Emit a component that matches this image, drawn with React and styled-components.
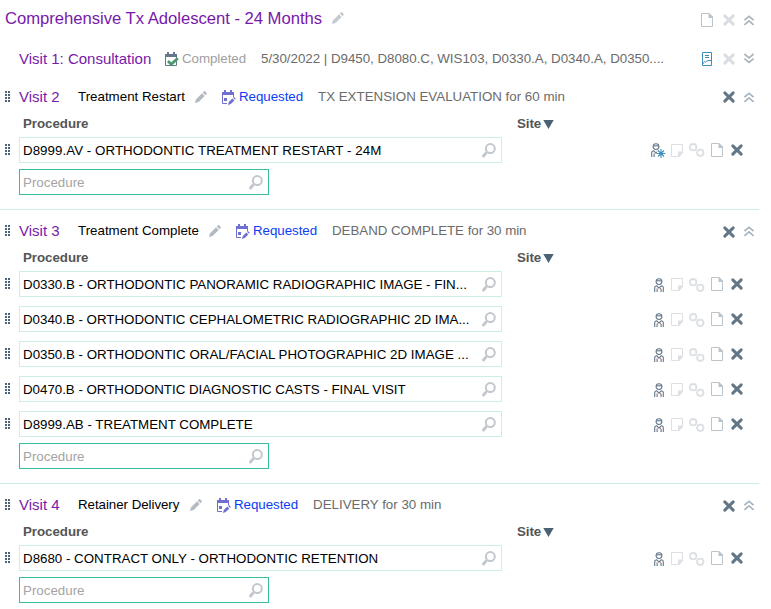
import React from 'react';
import styled, { createGlobalStyle } from 'styled-components';

const Global = createGlobalStyle`
  * { box-sizing: border-box; }
  body { margin: 0; background: #fff; font-family: "Liberation Sans", Arial, sans-serif; font-size: 13.333px; }
`;

const Page = styled.main`
  width: 771px;
  height: 609px;
  overflow: hidden;
  background: #fff;
`;

const PlanHeader = styled.header`
  display: flex;
  align-items: center;
  width: 759px;
  height: 38px;
  padding: 0 5px;
`;

const PlanTitle = styled.h1`
  margin: 0;
  width: 325px;
  flex: none;
  font-size: 16.67px;
  font-weight: 400;
  line-height: 20px;
  color: #7719aa;
  white-space: nowrap;
  letter-spacing: -0.03px;
`;

const VisitHeader = styled.div`
  display: flex;
  align-items: center;
  width: 759px;
  height: ${(p) => (p.$collapsed ? 37 : 40)}px;
  padding: ${(p) => (p.$collapsed ? 4 : 2)}px 5px 0 4px;
`;

const VisitTitle = styled.h2`
  flex: none;
  margin: 0 0 0 ${(p) => (p.$indent ? 15 : 8)}px;
  width: ${(p) => p.$width || 59}px;
  font-size: 15px;
  font-weight: 400;
  line-height: 18px;
  color: #7719aa;
  white-space: nowrap;
`;

const Label = styled.span`
  flex: none;
  width: ${(p) => (p.$width ? `${p.$width}px` : 'auto')};
  line-height: 16px;
  white-space: nowrap;
  color: ${(p) => p.$color || '#000'};
  letter-spacing: ${(p) => p.$spacing || 0}px;
`;

const Actions = styled.div`
  display: flex;
  align-items: center;
  margin-top: ${(p) => p.$drop || 0}px;
  margin-left: auto;
  gap: 9px;
`;

const VisitSection = styled.section`
  width: 759px;
  border-top: 1px solid ${(p) => (p.$divided ? '#cdeee4' : 'transparent')};
  padding-bottom: 14px;
`;

const Columns = styled.div`
  display: flex;
  height: 21px;
  padding-left: 23px;
  font-weight: 700;
  line-height: 16px;
  color: #555;
`;

const ProcedureColumn = styled.span`
  width: 494px;
  letter-spacing: -0.05px;
`;

const SiteColumn = styled.span`
  display: flex;
  gap: 2px;
  letter-spacing: -0.1px;
`;

const Procedures = styled.div`
  display: grid;
  gap: 9px;
`;

const ProcedureRow = styled.div`
  display: flex;
  align-items: center;
  height: 26px;
  padding: 0 16px 0 4px;
`;

const Field = styled.div`
  display: flex;
  align-items: center;
  flex: none;
  width: ${(p) => (p.$entry ? 250 : 483)}px;
  height: 26px;
  margin: ${(p) => (p.$entry ? '6px 0 0 19px' : '0 0 0 8px')};
  padding: 0 5px 0 3px;
  border: 1px solid ${(p) => (p.$entry ? '#35bf9c' : '#cdeee4')};
  color: ${(p) => (p.$entry ? '#a5a5a5' : '#000')};
  white-space: nowrap;
`;

const FieldText = styled.span`
  flex: 1;
  margin-top: 2px;
  line-height: 16px;
  letter-spacing: ${(p) => p.$spacing || 0}px;
`;

const RowActions = styled.div`
  display: flex;
  align-items: center;
  margin-left: auto;
`;

const Icon = styled.svg`
  display: block;
  flex: none;
  overflow: visible;
  margin-right: ${(p) => p.$mr || 0}px;
  margin-left: ${(p) => p.$ml || 0}px;
  margin-top: ${(p) => p.$mt || 0}px;
`;

const Grip = () => (
  <Icon width="7" height="12" viewBox="0 0 7 12" shapeRendering="crispEdges" fill="#4d6275">
    {[0, 3, 6, 9].map((y) => [1, 4].map((x) => <rect key={`${x}-${y}`} x={x} y={y} width="2" height="2" />))}
  </Icon>
);

const Pencil = ({ color = '#b3bac2', ...p }) => (
  <Icon width="12" height="12" viewBox="0 0 12 12" fill={color} {...p}>
    <path d="M0 12 .9 8.4 7 2.3 9.7 5 3.6 11.1Z" />
    <path d="M7.7 1.6 9 .3q.6-.5 1.1 0l1.6 1.6q.5.5 0 1.1l-1.3 1.3Z" />
  </Icon>
);

const Cross = ({ pale, ...p }) => (
  <Icon width="12" height="12" viewBox="0 0 12 12" stroke={pale ? '#dadee2' : '#627686'} strokeWidth="3" strokeLinecap="round" {...p}>
    <path d="M1.8 1.9 10.2 10.1M10.2 1.9 1.8 10.1" />
  </Icon>
);

const Chevrons = ({ down }) => (
  <Icon width="10" height="11" viewBox="0 0 10 11" fill="none" stroke="#a9b4bf" strokeWidth="1.7">
    <path d={down ? 'M.4 1 5 4.9 9.6 1M.4 5.6 5 9.5 9.6 5.6' : 'M.4 5.2 5 1.3 9.6 5.2M.4 9.8 5 5.9 9.6 9.8'} />
  </Icon>
);

const Document = (p) => (
  <Icon width="12" height="14" viewBox="0 0 12 14" {...p}>
    <path d="M.5.5H8L11.5 4V13.5H.5Z" fill="none" stroke="#bcc4cb" />
    <path d="M7.5 0H8L12 4V5H7.5Z" fill="#bcc4cb" />
  </Icon>
);

const SignedPage = () => (
  <Icon width="10" height="14" viewBox="0 0 10 14" fill="none" stroke="#3f8db8" $mr={2}>
    <path d="M.5.5H9.5V13.5H.5ZM3 3.5H7M3 5.5H7M.8 12.2C1.5 10 3 9 3.3 10.3 4.5 8.7 6 8.5 9 8.5" />
  </Icon>
);

const Calendar = ({ done, ...p }) => {
  const color = done ? '#63788a' : '#7070d0';
  return (
    <Icon width="14" height="15" viewBox="0 0 14 15" fill="none" $mr={3} {...p}>
      <path d="M0 2H12V5H0ZM2 0H4V3H2ZM8 0H10V3H8Z" fill={color} />
      {done ? (
        <>
          <path d="M.5 4V13.5H11.5V4" stroke={color} />
          <path d="M3 9 6.2 12.2 12.8 6.3" stroke="#4b986f" strokeWidth="2.8" />
        </>
      ) : (
        <>
          <path d="M.5 4V13.5H5M11.5 4V7" stroke={color} />
          <path d="M2 8H5V11H2ZM6 15 6.8 12 10.3 8.5 12.3 10.5 8.8 14ZM11 7.8 12 7 13.8 8.8 12.9 9.7Z" fill={color} />
        </>
      )}
    </Icon>
  );
};

const Search = () => (
  <Icon width="14" height="15" viewBox="0 0 14 15" fill="none" stroke="#c3c8ce">
    <circle cx="8.3" cy="5.6" r="4.5" strokeWidth="2" />
    <path d="M5 9.2 3.8 10.4" strokeWidth="2" />
    <path d="M3.6 10.6 1.5 13" strokeWidth="3" strokeLinecap="round" />
  </Icon>
);

const Provider = ({ starred, ...p }) => (
  <Icon width="10" height="14" viewBox="0 0 10 14" fill="none" stroke="#637789" strokeWidth="1.1" {...p}>
    <circle cx="5" cy="3.6" r="2.9" />
    <path d="M2.2 2.8H7.8" />
    <path d="M.7 14V9.6Q.7 8.2 2.8 7.8L5 10.2 7.2 7.8Q9.3 8.2 9.3 9.6V14M3.1 10.5V14" />
    {starred ? (
      <g>
        <circle cx="10" cy="10.5" r="4.2" fill="#fff" stroke="none" />
        <path d="M10 6V15M5.6 10.5H14.4M7 7.5 13 13.5M13 7.5 7 13.5" stroke="#3f8db8" />
      </g>
    ) : (
      <>
        <path d="M7.1 11V14" />
        <path d="M6 10.5H7" stroke="#d06a60" />
      </>
    )}
  </Icon>
);

const Note = (p) => (
  <Icon width="12" height="13" viewBox="0 0 12 13" {...p}>
    <path d="M.5.5H11.5V8.5L8 12.5H.5Z" fill="none" stroke="#dce0e4" />
    <path d="M7 13V7.5H12V8.5L8 13Z" fill="#dce0e4" />
  </Icon>
);

const Links = (p) => (
  <Icon width="16" height="14" viewBox="0 0 16 14" fill="none" stroke="#dce0e4" strokeWidth="1.8" {...p}>
    <circle cx="4.2" cy="4.2" r="3.2" />
    <circle cx="11.3" cy="9.8" r="3.2" />
  </Icon>
);

const SortArrow = () => (
  <Icon width="11" height="9" viewBox="0 0 11 9" fill="#4b6174" $mt={4}>
    <path d="M.3 0H10.7L5.5 9Z" />
  </Icon>
);

const visits = [
  { title: 'Visit 2', name: 'Treatment Restart', nameWidth: 117, info: 'TX EXTENSION EVALUATION for 60 min', procedures: [
    { text: 'D8999.AV - ORTHODONTIC TREATMENT RESTART - 24M', spacing: 0.04, starred: true },
  ] },
  { title: 'Visit 3', name: 'Treatment Complete', nameWidth: 131, info: 'DEBAND COMPLETE for 30 min', infoSpacing: -0.04, procedures: [
    { text: 'D0330.B - ORTHODONTIC PANORAMIC RADIOGRAPHIC IMAGE - FIN...' },
    { text: 'D0340.B - ORTHODONTIC CEPHALOMETRIC RADIOGRAPHIC 2D IMA...', spacing: -0.01 },
    { text: 'D0350.B - ORTHODONTIC ORAL/FACIAL PHOTOGRAPHIC 2D IMAGE ...' },
    { text: 'D0470.B - ORTHODONTIC DIAGNOSTIC CASTS - FINAL VISIT', spacing: -0.02 },
    { text: 'D8999.AB - TREATMENT COMPLETE' },
  ] },
  { title: 'Visit 4', name: 'Retainer Delivery', nameWidth: 112, nameSpacing: -0.05, info: 'DELIVERY for 30 min', procedures: [
    { text: 'D8680 - CONTRACT ONLY - ORTHODONTIC RETENTION' },
  ] },
];

const Visit = ({ visit, divided }) => (
  <VisitSection $divided={divided}>
    <VisitHeader>
      <Grip />
      <VisitTitle>{visit.title}</VisitTitle>
      <Label $width={visit.nameWidth} $spacing={visit.nameSpacing}>{visit.name}</Label>
      <Pencil $mr={15} />
      <Calendar $mt={1} />
      <Label $width={79} $color="#0b3df5" $spacing={-0.05}>Requested</Label>
      <Label $color="#6b6b6b" $spacing={visit.infoSpacing}>{visit.info}</Label>
      <Actions>
        <Cross $mt={divided ? 2 : 0} />
        <Chevrons />
      </Actions>
    </VisitHeader>
    <Columns>
      <ProcedureColumn>Procedure</ProcedureColumn>
      <SiteColumn>Site<SortArrow /></SiteColumn>
    </Columns>
    <Procedures>
      {visit.procedures.map((item) => (
        <ProcedureRow key={item.text}>
          <Grip />
          <Field>
            <FieldText $spacing={item.spacing}>{item.text}</FieldText>
            <Search />
          </Field>
          <RowActions>
            <Provider starred={item.starred} $mr={item.starred ? 10 : 7} $mt={item.starred ? 0 : 2} />
            <Note $mr={6} $mt={1} />
            <Links $mr={6} $mt={item.starred ? 0 : 2} />
            <Document $mr={8} />
            <Cross />
          </RowActions>
        </ProcedureRow>
      ))}
    </Procedures>
    <Field $entry>
      <FieldText>Procedure</FieldText>
      <Search />
    </Field>
  </VisitSection>
);

export default function App() {
  return (
    <Page>
      <Global />
      <PlanHeader>
        <PlanTitle>Comprehensive Tx Adolescent - 24 Months</PlanTitle>
        <Pencil color="#c6cbd1" $ml={2} $mt={-2} />
        <Actions $drop={2}>
          <Document $mr={1} />
          <Cross pale />
          <Chevrons />
        </Actions>
      </PlanHeader>
      <VisitHeader $collapsed>
        <VisitTitle $indent $width={146}>Visit 1: Consultation</VisitTitle>
        <Calendar done $mt={1} />
        <Label $width={79} $color="#a0a0a0" $spacing={-0.05}>Completed</Label>
        <Label $color="#6b6b6b" $spacing={-0.02}>5/30/2022 | D9450, D8080.C, WIS103, D0330.A, D0340.A, D0350....</Label>
        <Actions>
          <SignedPage />
          <Cross pale />
          <Chevrons down />
        </Actions>
      </VisitHeader>
      {visits.map((visit, i) => <Visit key={visit.title} visit={visit} divided={i > 0} />)}
    </Page>
  );
}
